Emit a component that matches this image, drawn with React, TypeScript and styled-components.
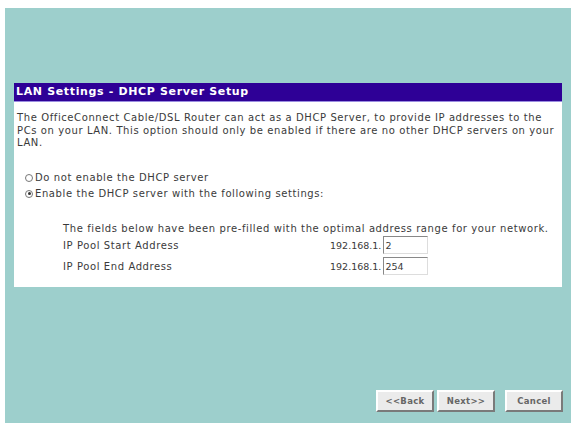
import React from "react";
import styled, { createGlobalStyle } from "styled-components";

const Global = createGlobalStyle`
  html, body { margin: 0; padding: 0; background: #ffffff; }
  body { font-family: "DejaVu Sans", Verdana, sans-serif; }
`;

const Page = styled.div`
  width: 576px;
  height: 425px;
  box-sizing: border-box;
  padding: 8px 5px 2px 5px;
`;

const Panel = styled.div`
  height: 415px;
  box-sizing: border-box;
  background: #9dcfcc;
  padding: 75px 9px 11px 9px;
  display: flex;
  flex-direction: column;
`;

const Header = styled.div`
  height: 18px;
  background: #2e0096;
  color: #ffffff;
  font-weight: bold;
  font-size: 11px;
  letter-spacing: 0.65px;
  line-height: 18px;
  padding-left: 2px;
  border-bottom: 1px solid #9a8de0;
`;

const Content = styled.div`
  background: #ffffff;
  height: 185px;
  box-sizing: border-box;
  padding: 10px 4px 0 3px;
  font-size: 10px;
  letter-spacing: 0.6px;
  color: #3a3a3a;
`;

const Para = styled.p`
  margin: 0;
  line-height: 12.5px;
  white-space: nowrap;
`;

const Options = styled.div`
  margin-top: 22px;
  margin-left: 8px;
  display: flex;
  flex-direction: column;
  gap: 4px;
`;

const Option = styled.label`
  display: flex;
  align-items: center;
  gap: 2px;
  line-height: 12px;
`;

const Radio = styled.span<{ $on?: boolean }>`
  width: 6px;
  height: 6px;
  border-radius: 50%;
  border: 1px solid #777;
  background: #fff;
  display: inline-flex;
  align-items: center;
  justify-content: center;
  &::after {
    content: "";
    width: 3px;
    height: 3px;
    border-radius: 50%;
    background: ${(p) => (p.$on ? "#333" : "transparent")};
  }
`;

const Settings = styled.div`
  margin-top: 23px;
  margin-left: 46px;
`;

const Grid = styled.div`
  display: grid;
  grid-template-columns: 267px auto;
  row-gap: 3px;
  margin-top: 1px;
  align-items: center;
`;

const Value = styled.div`
  display: flex;
  align-items: center;
  gap: 2px;
  font-size: 9.5px;
  letter-spacing: 0;
`;

const Field = styled.div`
  width: 45px;
  height: 18px;
  box-sizing: border-box;
  border: 1px solid #888;
  border-right-color: #ddd;
  border-bottom-color: #ddd;
  padding: 1px 1px;
  line-height: 15px;
  font-size: 9.5px;
`;

const Spacer = styled.div`
  flex: 1;
`;

const Buttons = styled.div`
  display: flex;
  justify-content: flex-end;
  margin-right: -1px;
  gap: 3px;
`;

const Btn = styled.button<{ $gap?: number }>`
  width: 58px;
  height: 22px;
  margin-left: ${(p) => p.$gap ?? 0}px;
  background: #ebebeb;
  border: 2px solid;
  border-color: #ffffff #7a7a7a #7a7a7a #ffffff;
  color: #666;
  font-family: "DejaVu Sans", Verdana, sans-serif;
  font-weight: bold;
  font-size: 8.5px;
  letter-spacing: 0.3px;
  padding: 0;
`;

export default function App() {
  return (
    <>
      <Global />
      <Page>
        <Panel>
          <Header>LAN Settings - DHCP Server Setup</Header>
          <Content>
            <Para>
              The OfficeConnect Cable/DSL Router can act as a DHCP Server, to provide IP addresses to the
              <br />
              PCs on your LAN. This option should only be enabled if there are no other DHCP servers on your
              <br />
              LAN.
            </Para>
            <Options>
              <Option>
                <Radio />
                Do not enable the DHCP server
              </Option>
              <Option>
                <Radio $on />
                Enable the DHCP server with the following settings:
              </Option>
            </Options>
            <Settings>
              <Para>The fields below have been pre-filled with the optimal address range for your network.</Para>
              <Grid>
                <span>IP Pool Start Address</span>
                <Value>
                  192.168.1.
                  <Field>2</Field>
                </Value>
                <span>IP Pool End Address</span>
                <Value>
                  192.168.1.
                  <Field>254</Field>
                </Value>
              </Grid>
            </Settings>
          </Content>
          <Spacer />
          <Buttons>
            <Btn>&lt;&lt;Back</Btn>
            <Btn>Next&gt;&gt;</Btn>
            <Btn $gap={7}>Cancel</Btn>
          </Buttons>
        </Panel>
      </Page>
    </>
  );
}
